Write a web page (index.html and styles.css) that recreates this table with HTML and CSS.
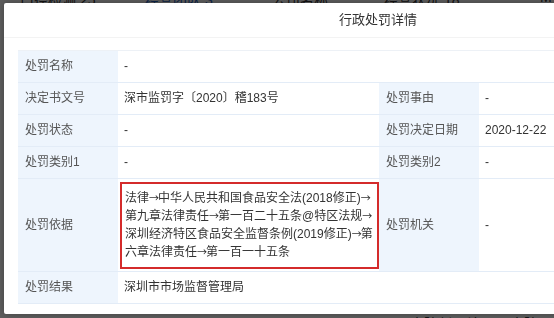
FILE: index.html
```html
<!DOCTYPE html>
<html lang="zh-CN">
<head>
    <meta charset="UTF-8">
    <meta name="viewport" content="width=device-width, initial-scale=1.0">
    <title>行政处罚详情</title>
    <link rel="stylesheet" href="styles.css">
</head>
<body>
    <!-- page behind the dialog -->
    <div class="page">
        <div class="page-row top">
            <span class="c1">口径检测 25</span>
            <span class="c2 link">经营团队 3</span>
            <span class="c3">公司名称</span>
            <span class="c4">经营状况 18</span>
            <span class="c5">M</span>
        </div>
        <div class="page-row bottom">
            <span class="c6">本院判罚结果 ▼</span>
            <span class="c7">本院</span>
        </div>
    </div>

    <div class="mask"></div>

    <div class="dialog">
        <div class="dialog-header">行政处罚详情</div>
        <div class="dialog-body">
            <table class="detail">
                <colgroup>
                    <col class="col-label">
                    <col class="col-value">
                    <col class="col-label">
                    <col>
                </colgroup>
                <tr>
                    <td class="label">处罚名称</td>
                    <td colspan="3">-</td>
                </tr>
                <tr>
                    <td class="label">决定书文号</td>
                    <td>深市监罚字〔2020〕稽183号</td>
                    <td class="label">处罚事由</td>
                    <td>-</td>
                </tr>
                <tr>
                    <td class="label">处罚状态</td>
                    <td>-</td>
                    <td class="label">处罚决定日期</td>
                    <td>2020-12-22</td>
                </tr>
                <tr>
                    <td class="label">处罚类别1</td>
                    <td>-</td>
                    <td class="label">处罚类别2</td>
                    <td>-</td>
                </tr>
                <tr class="tall">
                    <td class="label">处罚依据</td>
                    <td class="basis">
                        法律<i>→</i>中华人民共和国食品安全法(2018修正)<i>→</i><br>第九章法律责任<i>→</i>第一百二十五条@特区法规<i>→</i><br>深圳经济特区食品安全监督条例(2019修正)<i>→</i>第<br>六章法律责任<i>→</i>第一百一十五条
                        <span class="mark"></span>
                    </td>
                    <td class="label">处罚机关</td>
                    <td>-</td>
                </tr>
                <tr>
                    <td class="label">处罚结果</td>
                    <td colspan="3">深圳市市场监督管理局</td>
                </tr>
            </table>
        </div>
    </div>
</body>
</html>
```

FILE: styles.css
```css
/* Base */
body {
    margin: 0;
    width: 554px;
    height: 318px;
    overflow: hidden;
    font-family: "Liberation Sans", "Noto Sans CJK SC", sans-serif;
    font-size: 12px;
    color: #333;
    background: #fff;
}

/* Page behind the dialog */
.page {
    height: 318px;
    display: flex;
    flex-direction: column;
    justify-content: space-between;
}

.page-row {
    position: relative;
    height: 16px;
    font-size: 14px;
    color: #333;
}

.page-row.top {
    margin-top: -11px;
}

.page-row.bottom {
    margin-bottom: -11px;
}

.page-row span {
    position: absolute;
    top: 0;
    white-space: nowrap;
}

.page-row .link { color: #1f5fbf; }
.c1 { left: 20px; }
.c2 { left: 145px; }
.c3 { left: 272px; }
.c4 { left: 384px; }
.c5 { left: 540px; }
.c6 { left: 410px; }
.c7 { left: 510px; }

.mask {
    position: fixed;
    inset: 0;
    background: rgba(0, 0, 0, 0.64);
}

/* Dialog */
.dialog {
    position: fixed;
    left: 4px;
    top: 3px;
    width: 748px;
    height: 311px;
    background: #fff;
    border-radius: 2px;
    box-shadow: 0 0 6px rgba(0, 0, 0, 0.3);
}

.dialog-header {
    height: 34px;
    line-height: 34px;
    text-align: center;
    font-size: 13px;
    color: #333;
    border-bottom: 1px solid #f3f3f3;
}

.dialog-body {
    padding: 12px 14px 0;
}

.detail {
    width: 720px;
    border-collapse: collapse;
    table-layout: fixed;
    border-top: 1px solid #edf1f6;
}

.col-label { width: 100px; }
.col-value { width: 261px; }

.detail td {
    height: 32px;
    padding: 0 6px;
    line-height: 17px;
    border-bottom: 1px solid #e3ecf7;
    color: #333;
    vertical-align: middle;
    box-sizing: border-box;
}

.detail td.label {
    background: #eef5fd;
    color: #555;
    padding-left: 7px;
}

.detail tr.tall td {
    height: 88px;
}

.basis {
    position: relative;
    padding: 10px 7px !important;
    white-space: nowrap;
}

.basis i {
    font-style: normal;
    font-family: "Noto Sans CJK SC", sans-serif;
    font-size: 10px;
    letter-spacing: -1px;
}

/* red annotation box round the legal basis */
.mark {
    position: absolute;
    left: 2px;
    top: 3px;
    width: 255px;
    height: 83px;
    border: 2px solid #d42b2b;
}
```
